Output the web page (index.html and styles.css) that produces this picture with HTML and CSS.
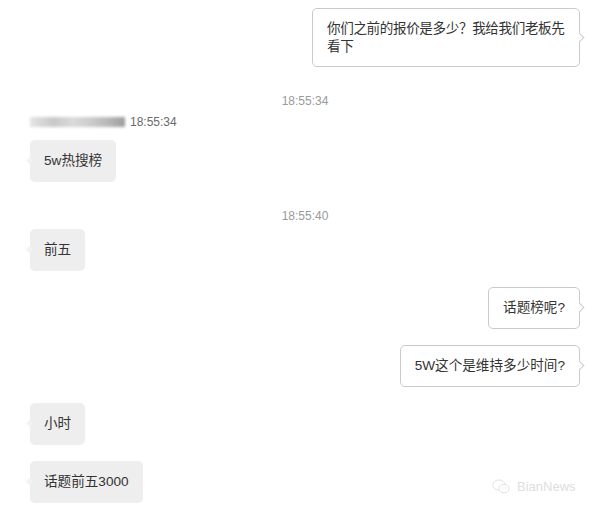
FILE: index.html
```html
<!DOCTYPE html>
<html lang="zh-CN">
<head>
    <meta charset="UTF-8">
    <title>聊天记录</title>
    <link rel="stylesheet" href="styles.css">
</head>
<body>
    <div class="chat">
        <div class="row right first">
            <div class="bubble out wide">你们之前的报价是多少？我给我们老板先看下</div>
        </div>

        <div class="time t1">18:55:34</div>

        <div class="sender">
            <span class="name-blur"></span>
            <span class="sender-time">18:55:34</span>
        </div>

        <div class="row left gap-s">
            <div class="bubble in">5w热搜榜</div>
        </div>

        <div class="time t2">18:55:40</div>

        <div class="row left gap-t">
            <div class="bubble in">前五</div>
        </div>

        <div class="row right">
            <div class="bubble out">话题榜呢?</div>
        </div>

        <div class="row right">
            <div class="bubble out">5W这个是维持多少时间?</div>
        </div>

        <div class="row left">
            <div class="bubble in">小时</div>
        </div>

        <div class="row left">
            <div class="bubble in">话题前五3000</div>
        </div>
    </div>

    <!-- watermark -->
    <div class="watermark">
        <svg width="18" height="15" viewBox="0 0 18 15">
            <ellipse cx="7" cy="6" rx="6.2" ry="5" fill="none" stroke="#e2e2e2" stroke-width="1"/>
            <ellipse cx="12" cy="9.5" rx="5.2" ry="4.2" fill="#fff" stroke="#e2e2e2" stroke-width="1"/>
            <circle cx="10.3" cy="9" r="0.7" fill="#e2e2e2"/>
            <circle cx="13.6" cy="9" r="0.7" fill="#e2e2e2"/>
        </svg>
        <span>BianNews</span>
    </div>
</body>
</html>
```

FILE: styles.css
```css
body {
    margin: 0;
    background-color: #fff;
    font-family: "Liberation Sans", "Noto Sans CJK SC", sans-serif;
    color: #333;
}

.chat {
    padding: 8px 13px 0 30px;
    display: flex;
    flex-direction: column;
}

.row {
    display: flex;
    margin-top: 16px;
}

.row.first {
    margin-top: 0;
}

.row.right {
    justify-content: flex-end;
}

.row.gap-s {
    margin-top: 10px;
}

.row.gap-t {
    margin-top: 5px;
}

.bubble {
    position: relative;
    box-sizing: border-box;
    padding: 12px 14px;
    font-size: 13.6px;
    line-height: 18px;
    border-radius: 5px;
}

.bubble.in {
    background-color: #efeeef;
}

.bubble.in::before {
    content: "";
    position: absolute;
    left: -3px;
    top: 50%;
    width: 5px;
    height: 5px;
    margin-top: -3px;
    background-color: #f4f3f4;
    transform: rotate(45deg);
}

.bubble.out {
    padding: 11px 14px;
    background-color: #fff;
    border: 1px solid #cacaca;
}

.bubble.out::after {
    content: "";
    position: absolute;
    right: -4px;
    top: 50%;
    width: 6px;
    height: 6px;
    margin-top: -4px;
    background-color: #fff;
    border-top: 1px solid #cacaca;
    border-right: 1px solid #cacaca;
    transform: rotate(45deg);
}

.bubble.wide {
    width: 268px;
    padding: 11px 8px 11px 14px;
    line-height: 17.5px;
    letter-spacing: -0.4px;
}

.time {
    font-size: 12px;
    line-height: 16px;
    color: #9a9a9a;
    text-align: center;
}

.time.t1 {
    margin-top: 26px;
}

.time.t2 {
    margin-top: 26px;
}

.sender {
    display: flex;
    align-items: center;
    gap: 5px;
    margin-top: 5px;
    height: 16px;
}

.name-blur {
    width: 95px;
    height: 10px;
    background: linear-gradient(90deg, #e4e4e4 0%, #c8c8c8 25%, #dadada 45%, #cfcfcf 60%, #b4b4b4 85%, #9c9c9c 100%);
    filter: blur(1.5px);
}

.sender-time {
    font-size: 12px;
    color: #6a6a6a;
}

.watermark {
    position: absolute;
    left: 492px;
    top: 479px;
    display: flex;
    align-items: center;
    gap: 7px;
    font-size: 13px;
    color: #dedede;
}
```
